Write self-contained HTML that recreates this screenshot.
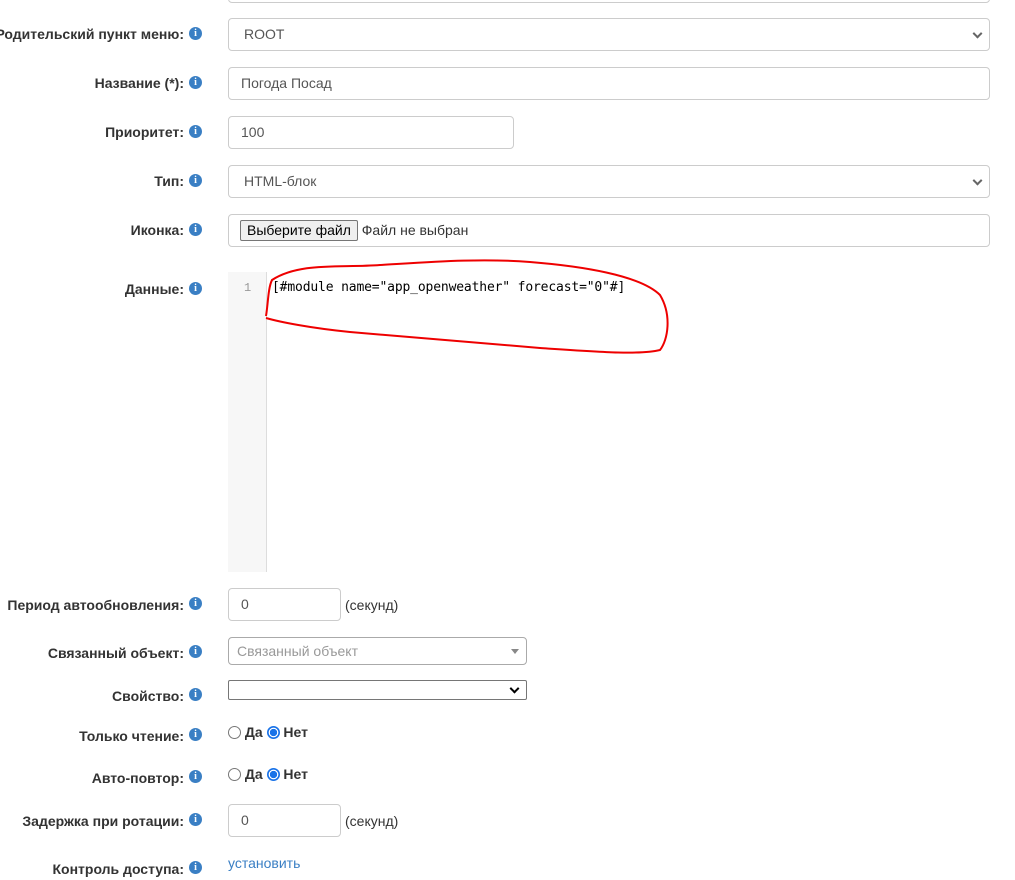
<!DOCTYPE html>
<html><head><meta charset="utf-8">
<style>
body{margin:0;width:1015px;height:880px;background:#fff;position:relative;overflow:hidden;font-family:"Liberation Sans","DejaVu Sans",sans-serif;color:#333;}
.lbl{position:absolute;right:831px;font-size:14px;font-weight:bold;white-space:nowrap;line-height:16px;margin-top:1px;}
.ic{position:absolute;width:13px;height:13px;border-radius:50%;background:#3a7fc4;color:#fff;font:bold 10px/13px "Liberation Serif",serif;text-align:center;margin-top:1px;}
.box{position:absolute;border:1px solid #ccc;border-radius:4px;background:#fff;box-sizing:border-box;font-size:14px;color:#555;padding-left:12px;line-height:31px;}
.chev{position:absolute;right:8px;top:50%;width:5px;height:5px;border-right:2px solid #666;border-bottom:2px solid #666;transform:translateY(-70%) rotate(45deg);}
.t{position:absolute;font-size:14px;}
.rad{display:inline-block;width:13px;height:13px;border:1px solid #777;border-radius:50%;vertical-align:-2px;box-sizing:border-box;}
.rad.on{border:1px solid #1a73e8;background:radial-gradient(circle,#1a73e8 0 3.5px,#fff 3.8px 4.6px,#1a73e8 5px);}
</style></head><body>
<div class="box" style="left:228px;top:-30px;width:762px;height:33px;"></div>

<div class="lbl" style="top:25px;">Родительский пункт меню:</div><div class="ic" style="left:189px;top:26px;">i</div>
<div class="box" style="left:228px;top:18px;width:762px;height:33px;padding-left:15px;">ROOT<span class="chev"></span></div>

<div class="lbl" style="top:74px;">Название (*):</div><div class="ic" style="left:189px;top:75px;">i</div>
<div class="box" style="left:228px;top:67px;width:762px;height:33px;">Погода Посад</div>

<div class="lbl" style="top:123px;">Приоритет:</div><div class="ic" style="left:189px;top:124px;">i</div>
<div class="box" style="left:228px;top:116px;width:286px;height:33px;">100</div>

<div class="lbl" style="top:172px;">Тип:</div><div class="ic" style="left:189px;top:173px;">i</div>
<div class="box" style="left:228px;top:165px;width:762px;height:33px;padding-left:15px;">HTML-блок<span class="chev"></span></div>

<div class="lbl" style="top:221px;">Иконка:</div><div class="ic" style="left:189px;top:222px;">i</div>
<div class="box" style="left:228px;top:214px;width:762px;height:33px;color:#333;padding-left:11px;">
<span style="display:inline-block;border:1px solid #767676;border-radius:2px;background:#efefef;line-height:19px;padding:0 6px;font-size:14px;color:#000;vertical-align:0px;">Выберите файл</span> Файл не выбран</div>

<div class="lbl" style="top:280px;">Данные:</div><div class="ic" style="left:189px;top:281px;">i</div>
<div style="position:absolute;left:228px;top:272px;width:38px;height:300px;background:#f7f7f7;border-right:1px solid #ddd;"></div>
<div style="position:absolute;left:244px;top:281px;font:12px/14px 'Liberation Mono',monospace;color:#999;">1</div>
<div style="position:absolute;left:272px;top:281px;font:13px/14px 'DejaVu Sans Mono','Liberation Mono',monospace;color:#000;letter-spacing:-0.15px;">[#module name="app_openweather" forecast="0"#]</div>
<svg style="position:absolute;left:0;top:0" width="1015" height="880"><path d="M266 316 C268 305 268 288 272 280 C300 262 340 268 380 265 C430 262 480 258 530 262 C580 266 640 275 660 295 C672 315 668 340 660 350 C640 355 600 352 540 348 C470 342 420 338 350 332 C310 328 280 322 266 318" fill="none" stroke="#e00" stroke-width="2"/></svg>

<div class="lbl" style="top:596px;">Период автообновления:</div><div class="ic" style="left:189px;top:596px;">i</div>
<div class="box" style="left:228px;top:588px;width:113px;height:33px;">0</div>
<div class="t" style="left:345px;top:597px;">(секунд)</div>

<div class="lbl" style="top:644px;">Связанный объект:</div><div class="ic" style="left:189px;top:644px;">i</div>
<div class="box" style="left:228px;top:637px;width:299px;height:28px;line-height:26px;padding-left:8px;color:#999;border-color:#aaa;">Связанный объект<span style="position:absolute;right:7px;top:11px;border:4px solid transparent;border-top:5px solid #888;"></span></div>

<div class="lbl" style="top:687px;">Свойство:</div><div class="ic" style="left:189px;top:687px;">i</div>
<div class="box" style="left:228px;top:680px;width:299px;height:20px;border-color:#767676;border-radius:2px;"><span class="chev" style="border-color:#000;"></span></div>

<div class="lbl" style="top:727px;">Только чтение:</div><div class="ic" style="left:189px;top:727px;">i</div>
<div class="t" style="left:228px;top:724px;font-weight:bold;"><span class="rad"></span> Да <span class="rad on"></span> Нет</div>

<div class="lbl" style="top:769px;">Авто-повтор:</div><div class="ic" style="left:189px;top:769px;">i</div>
<div class="t" style="left:228px;top:766px;font-weight:bold;"><span class="rad"></span> Да <span class="rad on"></span> Нет</div>

<div class="lbl" style="top:812px;">Задержка при ротации:</div><div class="ic" style="left:189px;top:812px;">i</div>
<div class="box" style="left:228px;top:804px;width:113px;height:33px;">0</div>
<div class="t" style="left:345px;top:813px;">(секунд)</div>

<div class="lbl" style="top:860px;">Контроль доступа:</div><div class="ic" style="left:189px;top:860px;">i</div>
<div class="t" style="left:228px;top:855px;color:#3a7fc4;">установить</div>
</body></html>
